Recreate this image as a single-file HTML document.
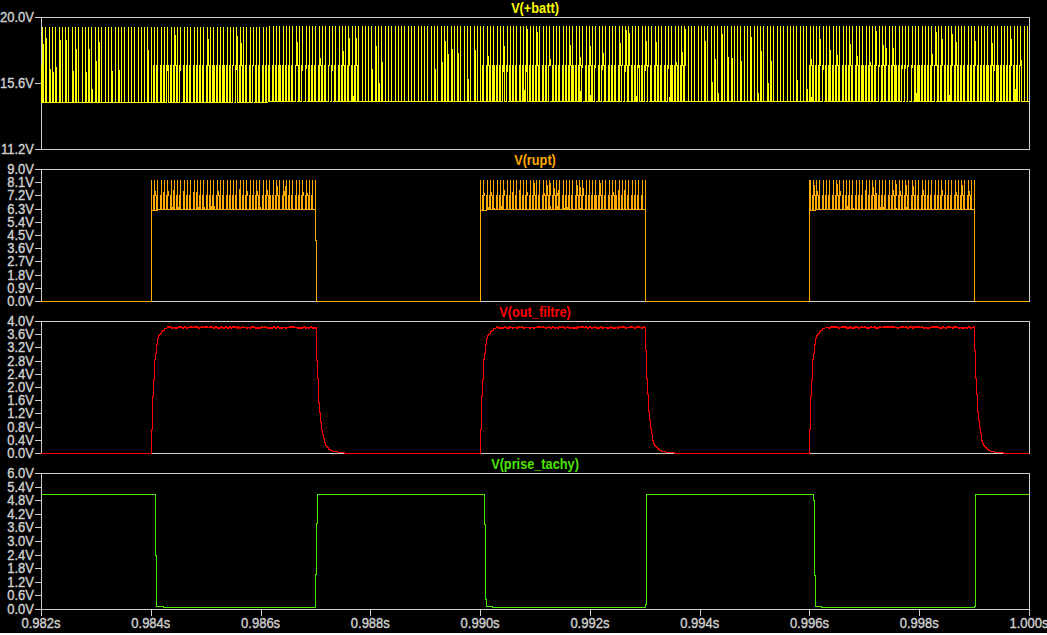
<!DOCTYPE html><html><head><meta charset="utf-8"><style>html,body{margin:0;padding:0;background:#000;width:1047px;height:635px;overflow:hidden}svg{display:block}text{font-family:"Liberation Sans",sans-serif;font-size:13px}</style></head><body>
<svg width="1047" height="635" viewBox="0 0 1047 635" shape-rendering="crispEdges">
<rect x="0" y="0" width="1047" height="635" fill="#000"/>
<rect x="0" y="633" width="1047" height="2" fill="#fff"/>
<path d="M41 17.5H1030M41 149.5H1030M41.5 17V150M1029.5 17V150M35 17.5H41M35 83.5H41M35 149.5H41M41 169.5H1030M41 301.5H1030M41.5 169V302M1029.5 169V302M35 169.5H41M35 182.5H41M35 195.5H41M35 209.5H41M35 222.5H41M35 235.5H41M35 248.5H41M35 261.5H41M35 275.5H41M35 288.5H41M35 301.5H41M41 321.5H1030M41 453.5H1030M41.5 321V454M1029.5 321V454M35 321.5H41M35 334.5H41M35 347.5H41M35 361.5H41M35 374.5H41M35 387.5H41M35 400.5H41M35 413.5H41M35 427.5H41M35 440.5H41M35 453.5H41M41 473.5H1030M41 609.5H1030M41.5 473V610M1029.5 473V610M35 473.5H41M35 487.5H41M35 500.5H41M35 514.5H41M35 527.5H41M35 541.5H41M35 555.5H41M35 568.5H41M35 582.5H41M35 595.5H41M35 609.5H41M41.5 610V616M151.5 610V616M261.5 610V616M370.5 610V616M480.5 610V616M590.5 610V616M700.5 610V616M809.5 610V616M919.5 610V616M1029.5 610V616" stroke="#d0d0d0" stroke-width="1" fill="none"/>
<g fill="#d0d0d0" stroke="#d0d0d0" stroke-width="0.35" text-anchor="end">
<text transform="translate(34 22) scale(1 1.1)">20.0V</text>
<text transform="translate(34 88) scale(1 1.1)">15.6V</text>
<text transform="translate(34 154) scale(1 1.1)">11.2V</text>
<text transform="translate(34 174) scale(1 1.1)">9.0V</text>
<text transform="translate(34 187) scale(1 1.1)">8.1V</text>
<text transform="translate(34 200) scale(1 1.1)">7.2V</text>
<text transform="translate(34 214) scale(1 1.1)">6.3V</text>
<text transform="translate(34 227) scale(1 1.1)">5.4V</text>
<text transform="translate(34 240) scale(1 1.1)">4.5V</text>
<text transform="translate(34 253) scale(1 1.1)">3.6V</text>
<text transform="translate(34 266) scale(1 1.1)">2.7V</text>
<text transform="translate(34 280) scale(1 1.1)">1.8V</text>
<text transform="translate(34 293) scale(1 1.1)">0.9V</text>
<text transform="translate(34 306) scale(1 1.1)">0.0V</text>
<text transform="translate(34 326) scale(1 1.1)">4.0V</text>
<text transform="translate(34 339) scale(1 1.1)">3.6V</text>
<text transform="translate(34 352) scale(1 1.1)">3.2V</text>
<text transform="translate(34 366) scale(1 1.1)">2.8V</text>
<text transform="translate(34 379) scale(1 1.1)">2.4V</text>
<text transform="translate(34 392) scale(1 1.1)">2.0V</text>
<text transform="translate(34 405) scale(1 1.1)">1.6V</text>
<text transform="translate(34 418) scale(1 1.1)">1.2V</text>
<text transform="translate(34 432) scale(1 1.1)">0.8V</text>
<text transform="translate(34 445) scale(1 1.1)">0.4V</text>
<text transform="translate(34 458) scale(1 1.1)">0.0V</text>
<text transform="translate(34 478) scale(1 1.1)">6.0V</text>
<text transform="translate(34 492) scale(1 1.1)">5.4V</text>
<text transform="translate(34 505) scale(1 1.1)">4.8V</text>
<text transform="translate(34 519) scale(1 1.1)">4.2V</text>
<text transform="translate(34 532) scale(1 1.1)">3.6V</text>
<text transform="translate(34 546) scale(1 1.1)">3.0V</text>
<text transform="translate(34 560) scale(1 1.1)">2.4V</text>
<text transform="translate(34 573) scale(1 1.1)">1.8V</text>
<text transform="translate(34 587) scale(1 1.1)">1.2V</text>
<text transform="translate(34 600) scale(1 1.1)">0.6V</text>
<text transform="translate(34 614) scale(1 1.1)">0.0V</text>
</g>
<g fill="#d0d0d0" stroke="#d0d0d0" stroke-width="0.35" text-anchor="middle">
<text transform="translate(41.0 628) scale(1 1.1)">0.982s</text>
<text transform="translate(150.8 628) scale(1 1.1)">0.984s</text>
<text transform="translate(260.6 628) scale(1 1.1)">0.986s</text>
<text transform="translate(370.3 628) scale(1 1.1)">0.988s</text>
<text transform="translate(480.1 628) scale(1 1.1)">0.990s</text>
<text transform="translate(589.9 628) scale(1 1.1)">0.992s</text>
<text transform="translate(699.7 628) scale(1 1.1)">0.994s</text>
<text transform="translate(809.4 628) scale(1 1.1)">0.996s</text>
<text transform="translate(919.2 628) scale(1 1.1)">0.998s</text>
<text transform="translate(1029.0 628) scale(1 1.1)">1.000s</text>
</g>
<text transform="translate(535 12.5) scale(0.98 1.1)" fill="#ffff00" text-anchor="middle" font-weight="bold">V(+batt)</text>
<text transform="translate(535 164.5) scale(0.98 1.1)" fill="#ffaa00" text-anchor="middle" font-weight="bold">V(rupt)</text>
<text transform="translate(535 316.5) scale(0.98 1.1)" fill="#ff0000" text-anchor="middle" font-weight="bold">V(out_filtre)</text>
<text transform="translate(535 468.5) scale(0.98 1.1)" fill="#4be600" text-anchor="middle" font-weight="bold">V(prise_tachy)</text>
<path fill="#ffff00" d="M41 65h1v38h-1zM42 27h1v76h-1zM43 44h1v59h-1zM45 27h1v76h-1zM46 38h1v65h-1zM49 27h1v76h-1zM50 69h1v34h-1zM52 27h1v76h-1zM53 72h1v31h-1zM55 27h1v76h-1zM56 67h1v36h-1zM59 27h1v76h-1zM60 40h1v63h-1zM62 27h1v76h-1zM65 27h1v76h-1zM66 40h1v63h-1zM68 27h1v76h-1zM72 27h1v76h-1zM73 71h1v32h-1zM75 27h1v76h-1zM76 49h1v54h-1zM78 27h1v76h-1zM82 27h1v76h-1zM85 27h1v76h-1zM86 72h1v31h-1zM88 27h1v76h-1zM89 49h1v54h-1zM91 27h1v76h-1zM92 89h1v14h-1zM95 27h1v76h-1zM96 61h1v42h-1zM98 27h1v76h-1zM99 42h1v61h-1zM101 27h1v76h-1zM105 27h1v76h-1zM108 27h1v76h-1zM111 27h1v76h-1zM112 71h1v32h-1zM115 27h1v76h-1zM118 27h1v76h-1zM119 70h1v33h-1zM121 27h1v76h-1zM124 27h1v76h-1zM128 27h1v76h-1zM131 27h1v76h-1zM134 27h1v76h-1zM138 27h1v76h-1zM141 27h1v76h-1zM144 27h1v76h-1zM147 27h1v76h-1zM148 50h1v53h-1zM151 27h1v76h-1zM154 27h1v76h-1zM153 65h1v38h-1zM157 27h1v76h-1zM156 65h1v38h-1zM161 27h1v76h-1zM160 65h1v38h-1zM164 27h1v76h-1zM163 65h1v38h-1zM167 27h1v44h-1zM166 65h1v38h-1zM168 65h1v38h-1zM171 27h1v76h-1zM170 65h1v38h-1zM174 27h1v76h-1zM173 65h1v38h-1zM175 35h1v31h-1zM177 27h1v76h-1zM176 65h1v38h-1zM180 27h1v44h-1zM179 65h1v38h-1zM184 27h1v76h-1zM183 65h1v38h-1zM187 27h1v76h-1zM186 65h1v38h-1zM190 27h1v76h-1zM189 65h1v38h-1zM194 27h1v76h-1zM193 65h1v38h-1zM197 27h1v76h-1zM196 65h1v38h-1zM200 27h1v76h-1zM199 65h1v38h-1zM203 27h1v76h-1zM202 65h1v38h-1zM207 27h1v76h-1zM206 65h1v38h-1zM208 39h1v27h-1zM210 27h1v76h-1zM209 65h1v38h-1zM213 27h1v76h-1zM212 65h1v38h-1zM214 65h1v38h-1zM217 27h1v76h-1zM216 65h1v38h-1zM220 27h1v76h-1zM219 65h1v38h-1zM223 27h1v76h-1zM222 65h1v38h-1zM224 65h1v38h-1zM227 27h1v76h-1zM226 65h1v38h-1zM230 27h1v76h-1zM229 65h1v38h-1zM233 27h1v39h-1zM232 65h1v38h-1zM236 27h1v43h-1zM235 65h1v38h-1zM237 65h1v38h-1zM237 36h1v30h-1zM240 27h1v76h-1zM239 65h1v38h-1zM241 43h1v23h-1zM243 27h1v76h-1zM242 65h1v38h-1zM246 27h1v76h-1zM245 65h1v38h-1zM250 27h1v76h-1zM249 65h1v38h-1zM253 27h1v39h-1zM252 65h1v38h-1zM256 27h1v76h-1zM255 65h1v38h-1zM259 27h1v76h-1zM258 65h1v38h-1zM263 27h1v76h-1zM262 65h1v38h-1zM266 27h1v76h-1zM265 65h1v38h-1zM269 26h1v76h-1zM268 65h1v37h-1zM273 26h1v76h-1zM272 65h1v37h-1zM276 26h1v76h-1zM275 65h1v37h-1zM279 26h1v76h-1zM278 65h1v37h-1zM280 65h1v37h-1zM283 26h1v76h-1zM282 65h1v37h-1zM286 26h1v76h-1zM285 65h1v37h-1zM289 26h1v76h-1zM288 65h1v37h-1zM292 26h1v76h-1zM291 65h1v37h-1zM296 26h1v40h-1zM295 65h1v37h-1zM297 42h1v24h-1zM299 26h1v76h-1zM298 65h1v37h-1zM302 26h1v45h-1zM301 65h1v37h-1zM306 26h1v43h-1zM305 65h1v37h-1zM309 26h1v76h-1zM308 65h1v37h-1zM312 26h1v76h-1zM311 65h1v37h-1zM315 26h1v76h-1zM314 65h1v37h-1zM319 26h1v76h-1zM318 65h1v37h-1zM320 58h1v8h-1zM322 26h1v76h-1zM321 65h1v37h-1zM325 26h1v76h-1zM324 65h1v37h-1zM329 26h1v40h-1zM328 65h1v37h-1zM332 26h1v45h-1zM331 65h1v37h-1zM335 26h1v76h-1zM334 65h1v37h-1zM339 26h1v76h-1zM338 65h1v37h-1zM342 26h1v76h-1zM341 65h1v37h-1zM343 51h1v15h-1zM345 26h1v76h-1zM344 65h1v37h-1zM348 26h1v76h-1zM347 65h1v37h-1zM349 38h1v28h-1zM352 26h1v76h-1zM351 65h1v37h-1zM353 96h1v6h-1zM355 26h1v76h-1zM354 65h1v37h-1zM356 38h1v28h-1zM358 26h1v76h-1zM357 65h1v37h-1zM362 26h1v76h-1zM365 26h1v76h-1zM368 26h1v76h-1zM371 26h1v76h-1zM372 69h1v33h-1zM375 26h1v76h-1zM376 46h1v56h-1zM378 26h1v76h-1zM379 83h1v19h-1zM381 26h1v76h-1zM382 62h1v40h-1zM385 26h1v76h-1zM388 26h1v76h-1zM391 26h1v76h-1zM395 26h1v76h-1zM398 26h1v76h-1zM401 26h1v76h-1zM404 26h1v76h-1zM408 26h1v76h-1zM411 26h1v76h-1zM414 26h1v76h-1zM418 26h1v76h-1zM421 26h1v76h-1zM424 26h1v76h-1zM427 26h1v76h-1zM431 26h1v76h-1zM434 26h1v76h-1zM435 69h1v33h-1zM437 26h1v76h-1zM441 26h1v76h-1zM442 62h1v40h-1zM444 26h1v76h-1zM445 41h1v61h-1zM447 26h1v76h-1zM448 54h1v48h-1zM451 26h1v76h-1zM452 49h1v53h-1zM454 26h1v76h-1zM457 26h1v76h-1zM458 53h1v49h-1zM460 26h1v76h-1zM464 26h1v76h-1zM467 26h1v76h-1zM468 79h1v23h-1zM470 26h1v76h-1zM474 26h1v76h-1zM475 50h1v52h-1zM477 26h1v76h-1zM480 26h1v76h-1zM483 26h1v76h-1zM482 65h1v37h-1zM487 26h1v76h-1zM486 65h1v37h-1zM488 56h1v10h-1zM490 26h1v76h-1zM489 65h1v37h-1zM493 26h1v76h-1zM492 65h1v37h-1zM494 65h1v37h-1zM497 26h1v76h-1zM496 65h1v37h-1zM500 26h1v76h-1zM499 65h1v37h-1zM503 26h1v46h-1zM502 65h1v37h-1zM504 65h1v37h-1zM504 46h1v20h-1zM507 26h1v46h-1zM506 65h1v37h-1zM510 26h1v76h-1zM509 65h1v37h-1zM513 26h1v76h-1zM512 65h1v37h-1zM516 26h1v76h-1zM515 65h1v37h-1zM520 26h1v76h-1zM519 65h1v37h-1zM523 26h1v76h-1zM522 65h1v37h-1zM524 90h1v12h-1zM526 26h1v46h-1zM525 65h1v37h-1zM527 65h1v37h-1zM527 29h1v37h-1zM530 26h1v76h-1zM529 65h1v37h-1zM533 26h1v76h-1zM532 65h1v37h-1zM536 26h1v76h-1zM535 65h1v37h-1zM537 32h1v34h-1zM539 26h1v76h-1zM538 65h1v37h-1zM543 26h1v76h-1zM542 65h1v37h-1zM546 26h1v76h-1zM545 65h1v37h-1zM549 26h1v40h-1zM548 65h1v37h-1zM550 59h1v7h-1zM553 26h1v76h-1zM552 65h1v37h-1zM556 26h1v76h-1zM555 65h1v37h-1zM559 26h1v76h-1zM558 65h1v37h-1zM563 26h1v76h-1zM562 65h1v37h-1zM566 26h1v76h-1zM565 65h1v37h-1zM569 26h1v76h-1zM568 65h1v37h-1zM570 45h1v21h-1zM572 26h1v76h-1zM571 65h1v37h-1zM573 65h1v37h-1zM576 26h1v76h-1zM575 65h1v37h-1zM579 26h1v76h-1zM578 65h1v37h-1zM580 91h1v11h-1zM580 57h1v9h-1zM582 26h1v42h-1zM581 65h1v37h-1zM586 26h1v76h-1zM585 65h1v37h-1zM589 26h1v76h-1zM588 65h1v37h-1zM590 95h1v7h-1zM590 46h1v20h-1zM592 26h1v76h-1zM591 65h1v37h-1zM595 26h1v42h-1zM594 65h1v37h-1zM599 26h1v76h-1zM598 65h1v37h-1zM602 26h1v44h-1zM601 65h1v37h-1zM603 53h1v13h-1zM605 26h1v76h-1zM604 65h1v37h-1zM609 26h1v76h-1zM608 65h1v37h-1zM612 26h1v76h-1zM611 65h1v37h-1zM615 26h1v76h-1zM614 65h1v37h-1zM619 26h1v76h-1zM618 65h1v37h-1zM620 43h1v23h-1zM622 26h1v40h-1zM621 65h1v37h-1zM625 26h1v46h-1zM624 65h1v37h-1zM626 30h1v36h-1zM628 26h1v76h-1zM627 65h1v37h-1zM629 33h1v33h-1zM632 26h1v76h-1zM631 65h1v37h-1zM635 26h1v76h-1zM634 65h1v37h-1zM636 96h1v6h-1zM638 26h1v42h-1zM637 65h1v37h-1zM639 65h1v37h-1zM642 26h1v76h-1zM641 65h1v37h-1zM645 26h1v45h-1zM644 65h1v37h-1zM646 41h1v25h-1zM648 26h1v41h-1zM647 65h1v37h-1zM651 26h1v76h-1zM650 65h1v37h-1zM655 26h1v76h-1zM654 65h1v37h-1zM656 42h1v24h-1zM658 26h1v76h-1zM657 65h1v37h-1zM661 26h1v76h-1zM660 65h1v37h-1zM665 26h1v76h-1zM664 65h1v37h-1zM668 26h1v43h-1zM667 65h1v37h-1zM669 97h1v5h-1zM671 26h1v76h-1zM670 65h1v37h-1zM672 65h1v37h-1zM675 26h1v76h-1zM674 65h1v37h-1zM676 62h1v4h-1zM678 26h1v76h-1zM677 65h1v37h-1zM681 26h1v76h-1zM680 65h1v37h-1zM682 52h1v14h-1zM684 26h1v76h-1zM683 65h1v37h-1zM685 29h1v37h-1zM688 26h1v76h-1zM691 26h1v76h-1zM694 26h1v76h-1zM698 26h1v76h-1zM701 26h1v76h-1zM704 26h1v76h-1zM705 41h1v61h-1zM707 26h1v76h-1zM711 26h1v76h-1zM712 82h1v20h-1zM714 26h1v76h-1zM715 59h1v43h-1zM717 26h1v76h-1zM718 93h1v9h-1zM721 26h1v76h-1zM722 34h1v68h-1zM724 26h1v76h-1zM727 26h1v76h-1zM728 57h1v45h-1zM731 26h1v76h-1zM732 58h1v44h-1zM734 26h1v76h-1zM737 26h1v76h-1zM740 26h1v76h-1zM741 61h1v41h-1zM744 26h1v76h-1zM747 26h1v76h-1zM750 26h1v76h-1zM751 37h1v65h-1zM754 26h1v76h-1zM757 26h1v76h-1zM758 93h1v9h-1zM760 26h1v76h-1zM761 51h1v51h-1zM763 26h1v76h-1zM767 26h1v76h-1zM768 83h1v19h-1zM770 26h1v76h-1zM771 61h1v41h-1zM773 26h1v76h-1zM777 26h1v76h-1zM780 26h1v76h-1zM783 26h1v76h-1zM787 26h1v76h-1zM790 26h1v76h-1zM793 26h1v76h-1zM796 26h1v76h-1zM797 80h1v22h-1zM800 26h1v76h-1zM803 26h1v76h-1zM806 26h1v76h-1zM807 89h1v13h-1zM810 26h1v76h-1zM809 65h1v37h-1zM811 97h1v5h-1zM811 59h1v7h-1zM813 26h1v76h-1zM812 65h1v37h-1zM816 26h1v76h-1zM815 65h1v37h-1zM819 26h1v76h-1zM818 65h1v37h-1zM820 39h1v27h-1zM823 26h1v44h-1zM822 65h1v37h-1zM826 26h1v76h-1zM825 65h1v37h-1zM829 26h1v76h-1zM828 65h1v37h-1zM830 65h1v37h-1zM830 50h1v16h-1zM833 26h1v76h-1zM832 65h1v37h-1zM836 26h1v76h-1zM835 65h1v37h-1zM837 55h1v11h-1zM839 26h1v76h-1zM838 65h1v37h-1zM843 26h1v76h-1zM842 65h1v37h-1zM846 26h1v76h-1zM845 65h1v37h-1zM849 26h1v76h-1zM848 65h1v37h-1zM850 44h1v22h-1zM852 26h1v76h-1zM851 65h1v37h-1zM856 26h1v76h-1zM855 65h1v37h-1zM857 56h1v10h-1zM859 26h1v76h-1zM858 65h1v37h-1zM862 26h1v76h-1zM861 65h1v37h-1zM863 65h1v37h-1zM866 26h1v76h-1zM865 65h1v37h-1zM869 26h1v76h-1zM868 65h1v37h-1zM870 62h1v4h-1zM872 26h1v76h-1zM871 65h1v37h-1zM875 26h1v76h-1zM874 65h1v37h-1zM876 31h1v35h-1zM879 26h1v41h-1zM878 65h1v37h-1zM882 26h1v76h-1zM881 65h1v37h-1zM883 45h1v21h-1zM885 26h1v76h-1zM884 65h1v37h-1zM886 48h1v18h-1zM889 26h1v76h-1zM888 65h1v37h-1zM892 26h1v76h-1zM891 65h1v37h-1zM893 48h1v18h-1zM895 26h1v76h-1zM894 65h1v37h-1zM896 65h1v37h-1zM899 26h1v76h-1zM898 65h1v37h-1zM902 26h1v43h-1zM901 65h1v37h-1zM905 26h1v43h-1zM904 65h1v37h-1zM908 26h1v41h-1zM907 65h1v37h-1zM912 26h1v42h-1zM911 65h1v37h-1zM915 26h1v76h-1zM914 65h1v37h-1zM916 93h1v9h-1zM918 26h1v76h-1zM917 65h1v37h-1zM919 65h1v37h-1zM922 26h1v76h-1zM921 65h1v37h-1zM925 26h1v76h-1zM924 65h1v37h-1zM928 26h1v76h-1zM927 65h1v37h-1zM931 26h1v76h-1zM930 65h1v37h-1zM932 54h1v12h-1zM935 26h1v40h-1zM934 65h1v37h-1zM936 32h1v34h-1zM938 26h1v76h-1zM937 65h1v37h-1zM941 26h1v76h-1zM940 65h1v37h-1zM942 39h1v27h-1zM945 26h1v76h-1zM944 65h1v37h-1zM948 26h1v76h-1zM947 65h1v37h-1zM949 95h1v7h-1zM951 26h1v76h-1zM950 65h1v37h-1zM952 34h1v32h-1zM955 26h1v76h-1zM954 65h1v37h-1zM956 42h1v24h-1zM958 26h1v76h-1zM957 65h1v37h-1zM961 26h1v76h-1zM960 65h1v37h-1zM964 26h1v76h-1zM963 65h1v37h-1zM968 26h1v76h-1zM967 65h1v37h-1zM971 26h1v76h-1zM970 65h1v37h-1zM974 26h1v76h-1zM973 65h1v37h-1zM975 41h1v25h-1zM978 26h1v76h-1zM977 65h1v37h-1zM981 26h1v76h-1zM980 65h1v37h-1zM984 26h1v76h-1zM983 65h1v37h-1zM987 26h1v76h-1zM986 65h1v37h-1zM988 65h1v37h-1zM991 26h1v76h-1zM990 65h1v37h-1zM992 43h1v23h-1zM994 26h1v45h-1zM993 65h1v37h-1zM997 26h1v76h-1zM996 65h1v37h-1zM998 65h1v37h-1zM1001 26h1v76h-1zM1000 65h1v37h-1zM1004 26h1v76h-1zM1003 65h1v37h-1zM1007 26h1v76h-1zM1006 65h1v37h-1zM1010 26h1v76h-1zM1009 65h1v37h-1zM1011 39h1v27h-1zM1014 26h1v76h-1zM1013 65h1v37h-1zM1015 89h1v13h-1zM1017 26h1v76h-1zM1016 65h1v37h-1zM1020 26h1v40h-1zM1019 65h1v37h-1zM1021 65h1v37h-1zM1021 60h1v6h-1zM1024 26h1v76h-1zM1027 26h1v76h-1zM41 102h126v1h-126zM168 102h12v1h-12zM181 102h52v1h-52zM234 102h2v1h-2zM237 102h16v1h-16zM254 102h14v1h-14zM268 101h28v1h-28zM297 101h5v1h-5zM303 101h3v1h-3zM307 101h22v1h-22zM330 101h2v1h-2zM333 101h170v1h-170zM504 101h3v1h-3zM508 101h18v1h-18zM527 101h22v1h-22zM550 101h32v1h-32zM583 101h12v1h-12zM596 101h6v1h-6zM603 101h19v1h-19zM623 101h2v1h-2zM626 101h12v1h-12zM639 101h6v1h-6zM646 101h2v1h-2zM649 101h19v1h-19zM669 101h154v1h-154zM824 101h55v1h-55zM880 101h22v1h-22zM903 101h2v1h-2zM906 101h2v1h-2zM909 101h3v1h-3zM913 101h22v1h-22zM936 101h58v1h-58zM995 101h25v1h-25zM1021 101h8v1h-8z"/>
<path fill="#ffaa00" d="M41 301h111v1h-111zM151 180h1v122h-1zM315 180h1v61h-1zM316 240h1v62h-1zM151 210h7v1h-7zM157 209h159v1h-159zM154 180h1v30h-1zM153 195h1v15h-1zM155 191h1v5h-1zM157 180h1v30h-1zM156 195h1v15h-1zM161 180h1v30h-1zM160 195h1v15h-1zM164 180h1v30h-1zM163 195h1v15h-1zM163 192h1v4h-1zM167 180h1v30h-1zM166 195h1v15h-1zM168 191h1v5h-1zM171 180h1v30h-1zM170 195h1v15h-1zM172 207h1v3h-1zM174 180h1v30h-1zM173 195h1v15h-1zM173 190h1v6h-1zM177 180h1v30h-1zM176 195h1v15h-1zM178 207h1v3h-1zM180 180h1v30h-1zM179 195h1v15h-1zM184 180h1v30h-1zM183 195h1v15h-1zM183 191h1v5h-1zM187 180h1v30h-1zM186 195h1v15h-1zM190 180h1v30h-1zM189 195h1v15h-1zM194 180h1v30h-1zM193 195h1v15h-1zM193 192h1v4h-1zM197 180h1v30h-1zM196 195h1v15h-1zM198 207h1v3h-1zM196 192h1v4h-1zM200 180h1v30h-1zM199 195h1v15h-1zM203 180h1v30h-1zM202 195h1v15h-1zM204 207h1v3h-1zM207 180h1v30h-1zM206 195h1v15h-1zM210 180h1v30h-1zM209 195h1v15h-1zM211 206h1v4h-1zM213 180h1v30h-1zM212 195h1v15h-1zM214 206h1v4h-1zM217 180h1v30h-1zM216 195h1v15h-1zM218 191h1v5h-1zM220 180h1v30h-1zM219 195h1v15h-1zM223 180h1v30h-1zM222 195h1v15h-1zM227 180h1v30h-1zM226 195h1v15h-1zM230 180h1v30h-1zM229 195h1v15h-1zM233 180h1v30h-1zM232 195h1v15h-1zM236 180h1v30h-1zM235 195h1v15h-1zM240 180h1v30h-1zM239 195h1v15h-1zM239 189h1v7h-1zM243 180h1v30h-1zM242 195h1v15h-1zM246 180h1v30h-1zM245 195h1v15h-1zM247 191h1v5h-1zM250 180h1v30h-1zM249 195h1v15h-1zM253 180h1v30h-1zM252 195h1v15h-1zM256 180h1v30h-1zM255 195h1v15h-1zM257 191h1v5h-1zM259 180h1v30h-1zM258 195h1v15h-1zM260 207h1v3h-1zM263 180h1v30h-1zM262 195h1v15h-1zM266 180h1v30h-1zM265 195h1v15h-1zM267 190h1v6h-1zM269 180h1v30h-1zM268 195h1v15h-1zM270 195h1v15h-1zM273 180h1v30h-1zM272 195h1v15h-1zM276 180h1v30h-1zM275 195h1v15h-1zM277 186h1v10h-1zM279 180h1v30h-1zM278 195h1v15h-1zM283 180h1v30h-1zM282 195h1v15h-1zM284 191h1v5h-1zM286 180h1v30h-1zM285 195h1v15h-1zM285 186h1v10h-1zM289 180h1v30h-1zM288 195h1v15h-1zM292 180h1v30h-1zM291 195h1v15h-1zM296 180h1v30h-1zM295 195h1v15h-1zM299 180h1v30h-1zM298 195h1v15h-1zM302 180h1v30h-1zM301 195h1v15h-1zM303 192h1v4h-1zM306 180h1v30h-1zM305 195h1v15h-1zM307 193h1v3h-1zM309 180h1v30h-1zM308 195h1v15h-1zM312 180h1v30h-1zM311 195h1v15h-1zM316 301h165v1h-165zM480 180h1v122h-1zM645 180h1v122h-1zM480 210h7v1h-7zM486 209h160v1h-160zM483 180h1v30h-1zM482 195h1v15h-1zM484 193h1v3h-1zM487 180h1v30h-1zM486 195h1v15h-1zM488 207h1v3h-1zM490 180h1v30h-1zM489 195h1v15h-1zM491 192h1v4h-1zM493 180h1v30h-1zM492 195h1v15h-1zM494 208h1v2h-1zM497 180h1v30h-1zM496 195h1v15h-1zM500 180h1v30h-1zM499 195h1v15h-1zM501 206h1v4h-1zM503 180h1v30h-1zM502 195h1v15h-1zM504 190h1v6h-1zM507 180h1v30h-1zM506 195h1v15h-1zM510 180h1v30h-1zM509 195h1v15h-1zM513 180h1v30h-1zM512 195h1v15h-1zM512 192h1v4h-1zM516 180h1v30h-1zM515 195h1v15h-1zM520 180h1v30h-1zM519 195h1v15h-1zM519 190h1v6h-1zM523 180h1v30h-1zM522 195h1v15h-1zM526 180h1v30h-1zM525 195h1v15h-1zM527 192h1v4h-1zM530 180h1v30h-1zM529 195h1v15h-1zM533 180h1v30h-1zM532 195h1v15h-1zM534 183h1v13h-1zM536 180h1v30h-1zM535 195h1v15h-1zM539 180h1v30h-1zM538 195h1v15h-1zM543 180h1v30h-1zM542 195h1v15h-1zM544 193h1v3h-1zM546 180h1v30h-1zM545 195h1v15h-1zM547 185h1v11h-1zM549 180h1v30h-1zM548 195h1v15h-1zM550 206h1v4h-1zM550 183h1v13h-1zM553 180h1v30h-1zM552 195h1v15h-1zM554 188h1v8h-1zM556 180h1v30h-1zM555 195h1v15h-1zM557 206h1v4h-1zM557 193h1v3h-1zM559 180h1v30h-1zM558 195h1v15h-1zM558 190h1v6h-1zM563 180h1v30h-1zM562 195h1v15h-1zM564 208h1v2h-1zM566 180h1v30h-1zM565 195h1v15h-1zM567 207h1v3h-1zM569 180h1v30h-1zM568 195h1v15h-1zM572 180h1v30h-1zM571 195h1v15h-1zM576 180h1v30h-1zM575 195h1v15h-1zM577 185h1v11h-1zM579 180h1v30h-1zM578 195h1v15h-1zM580 208h1v2h-1zM580 187h1v9h-1zM582 180h1v30h-1zM581 195h1v15h-1zM583 188h1v8h-1zM586 180h1v30h-1zM585 195h1v15h-1zM589 180h1v30h-1zM588 195h1v15h-1zM592 180h1v30h-1zM591 195h1v15h-1zM595 180h1v30h-1zM594 195h1v15h-1zM596 195h1v15h-1zM599 180h1v30h-1zM598 195h1v15h-1zM600 183h1v13h-1zM602 180h1v30h-1zM601 195h1v15h-1zM605 180h1v30h-1zM604 195h1v15h-1zM609 180h1v30h-1zM608 195h1v15h-1zM612 180h1v30h-1zM611 195h1v15h-1zM613 192h1v4h-1zM615 180h1v30h-1zM614 195h1v15h-1zM616 195h1v15h-1zM619 180h1v30h-1zM618 195h1v15h-1zM618 190h1v6h-1zM622 180h1v30h-1zM621 195h1v15h-1zM625 180h1v30h-1zM624 195h1v15h-1zM624 190h1v6h-1zM628 180h1v30h-1zM627 195h1v15h-1zM632 180h1v30h-1zM631 195h1v15h-1zM635 180h1v30h-1zM634 195h1v15h-1zM638 180h1v30h-1zM637 195h1v15h-1zM642 180h1v30h-1zM641 195h1v15h-1zM645 301h165v1h-165zM809 180h1v122h-1zM974 180h1v122h-1zM809 210h7v1h-7zM815 209h160v1h-160zM810 180h1v30h-1zM809 195h1v15h-1zM809 183h1v13h-1zM813 180h1v30h-1zM812 195h1v15h-1zM814 185h1v11h-1zM816 180h1v30h-1zM815 195h1v15h-1zM817 191h1v5h-1zM819 180h1v30h-1zM818 195h1v15h-1zM823 180h1v30h-1zM822 195h1v15h-1zM826 180h1v30h-1zM825 195h1v15h-1zM829 180h1v30h-1zM828 195h1v15h-1zM833 180h1v30h-1zM832 195h1v15h-1zM836 180h1v30h-1zM835 195h1v15h-1zM837 184h1v12h-1zM839 180h1v30h-1zM838 195h1v15h-1zM840 191h1v5h-1zM843 180h1v30h-1zM842 195h1v15h-1zM846 180h1v30h-1zM845 195h1v15h-1zM847 206h1v4h-1zM849 180h1v30h-1zM848 195h1v15h-1zM852 180h1v30h-1zM851 195h1v15h-1zM853 208h1v2h-1zM856 180h1v30h-1zM855 195h1v15h-1zM859 180h1v30h-1zM858 195h1v15h-1zM862 180h1v30h-1zM861 195h1v15h-1zM866 180h1v30h-1zM865 195h1v15h-1zM865 190h1v6h-1zM869 180h1v30h-1zM868 195h1v15h-1zM872 180h1v30h-1zM871 195h1v15h-1zM873 187h1v9h-1zM875 180h1v30h-1zM874 195h1v15h-1zM876 195h1v15h-1zM876 208h1v2h-1zM876 193h1v3h-1zM879 180h1v30h-1zM878 195h1v15h-1zM880 207h1v3h-1zM882 180h1v30h-1zM881 195h1v15h-1zM883 207h1v3h-1zM885 180h1v30h-1zM884 195h1v15h-1zM889 180h1v30h-1zM888 195h1v15h-1zM892 180h1v30h-1zM891 195h1v15h-1zM893 190h1v6h-1zM895 180h1v30h-1zM894 195h1v15h-1zM896 208h1v2h-1zM896 184h1v12h-1zM899 180h1v30h-1zM898 195h1v15h-1zM900 191h1v5h-1zM902 180h1v30h-1zM901 195h1v15h-1zM905 180h1v30h-1zM904 195h1v15h-1zM906 207h1v3h-1zM906 185h1v11h-1zM908 180h1v30h-1zM907 195h1v15h-1zM912 180h1v30h-1zM911 195h1v15h-1zM913 186h1v10h-1zM915 180h1v30h-1zM914 195h1v15h-1zM918 180h1v30h-1zM917 195h1v15h-1zM922 180h1v30h-1zM921 195h1v15h-1zM923 190h1v6h-1zM925 180h1v30h-1zM924 195h1v15h-1zM928 180h1v30h-1zM927 195h1v15h-1zM931 180h1v30h-1zM930 195h1v15h-1zM935 180h1v30h-1zM934 195h1v15h-1zM938 180h1v30h-1zM937 195h1v15h-1zM941 180h1v30h-1zM940 195h1v15h-1zM942 190h1v6h-1zM945 180h1v30h-1zM944 195h1v15h-1zM948 180h1v30h-1zM947 195h1v15h-1zM951 180h1v30h-1zM950 195h1v15h-1zM955 180h1v30h-1zM954 195h1v15h-1zM956 192h1v4h-1zM958 180h1v30h-1zM957 195h1v15h-1zM961 180h1v30h-1zM960 195h1v15h-1zM962 185h1v11h-1zM964 180h1v30h-1zM963 195h1v15h-1zM968 180h1v30h-1zM967 195h1v15h-1zM969 191h1v5h-1zM971 180h1v30h-1zM970 195h1v15h-1zM974 301h55v1h-55z"/>
<path fill="#ff0000" d="M41 453h111v1h-111zM151 429h1v25h-1zM152 396h1v34h-1zM153 379h1v18h-1zM154 359h1v21h-1zM155 353h1v7h-1zM156 344h1v10h-1zM157 338h1v7h-1zM158 335h1v4h-1zM159 334h1v2h-1zM160 333h1v2h-1zM161 331h1v3h-1zM162 330h1v2h-1zM163 330h1v1h-1zM164 328h1v3h-1zM165 328h1v1h-1zM166 328h1v1h-1zM167 326h1v2h-1zM168 326h1v2h-1zM169 326h1v2h-1zM170 326h1v2h-1zM171 327h1v2h-1zM172 327h1v2h-1zM173 327h1v1h-1zM174 327h1v2h-1zM175 327h1v2h-1zM176 327h1v2h-1zM177 327h1v2h-1zM178 326h1v2h-1zM179 326h1v2h-1zM180 326h1v2h-1zM181 326h1v2h-1zM182 327h1v2h-1zM183 327h1v2h-1zM184 326h1v2h-1zM185 326h1v2h-1zM186 327h1v2h-1zM187 327h1v2h-1zM188 327h1v1h-1zM189 326h1v2h-1zM190 326h1v2h-1zM191 326h1v2h-1zM192 326h1v2h-1zM193 327h1v1h-1zM194 326h1v2h-1zM195 326h1v2h-1zM196 326h1v2h-1zM197 326h1v2h-1zM198 327h1v2h-1zM199 327h1v2h-1zM200 327h1v1h-1zM201 326h1v2h-1zM202 326h1v2h-1zM203 327h1v1h-1zM204 326h1v2h-1zM205 326h1v2h-1zM206 326h1v2h-1zM207 326h1v2h-1zM208 327h1v1h-1zM209 326h1v2h-1zM210 326h1v2h-1zM211 326h1v2h-1zM212 326h1v2h-1zM213 327h1v2h-1zM214 327h1v2h-1zM215 326h1v2h-1zM216 326h1v2h-1zM217 327h1v2h-1zM218 327h1v2h-1zM219 327h1v2h-1zM220 327h1v2h-1zM221 326h1v2h-1zM222 326h1v2h-1zM223 327h1v2h-1zM224 327h1v2h-1zM225 326h1v2h-1zM226 326h1v2h-1zM227 327h1v2h-1zM228 327h1v2h-1zM229 326h1v2h-1zM230 326h1v3h-1zM231 327h1v2h-1zM232 326h1v2h-1zM233 326h1v2h-1zM234 326h1v2h-1zM235 326h1v2h-1zM236 327h1v2h-1zM237 326h1v3h-1zM238 326h1v2h-1zM239 327h1v2h-1zM240 327h1v2h-1zM241 327h1v1h-1zM242 326h1v2h-1zM243 326h1v2h-1zM244 327h1v1h-1zM245 327h1v1h-1zM246 327h1v2h-1zM247 327h1v2h-1zM248 327h1v1h-1zM249 327h1v2h-1zM250 327h1v2h-1zM251 326h1v2h-1zM252 326h1v2h-1zM253 326h1v2h-1zM254 326h1v2h-1zM255 327h1v2h-1zM256 327h1v2h-1zM257 327h1v2h-1zM258 327h1v2h-1zM259 327h1v2h-1zM260 327h1v2h-1zM261 326h1v2h-1zM262 326h1v2h-1zM263 327h1v1h-1zM264 326h1v2h-1zM265 326h1v2h-1zM266 327h1v1h-1zM267 327h1v2h-1zM268 327h1v2h-1zM269 327h1v2h-1zM270 327h1v2h-1zM271 327h1v2h-1zM272 327h1v2h-1zM273 326h1v2h-1zM274 326h1v2h-1zM275 327h1v2h-1zM276 327h1v2h-1zM277 326h1v2h-1zM278 326h1v2h-1zM279 327h1v2h-1zM280 327h1v2h-1zM281 327h1v2h-1zM282 327h1v2h-1zM283 327h1v1h-1zM284 327h1v1h-1zM285 327h1v2h-1zM286 327h1v2h-1zM287 327h1v1h-1zM288 327h1v1h-1zM289 326h1v2h-1zM290 326h1v2h-1zM291 326h1v2h-1zM292 326h1v2h-1zM293 326h1v2h-1zM294 326h1v2h-1zM295 327h1v1h-1zM296 327h1v1h-1zM297 327h1v2h-1zM298 327h1v2h-1zM299 327h1v2h-1zM300 327h1v2h-1zM301 327h1v2h-1zM302 327h1v2h-1zM303 326h1v2h-1zM304 326h1v2h-1zM305 327h1v2h-1zM306 327h1v2h-1zM307 327h1v1h-1zM308 327h1v2h-1zM309 327h1v2h-1zM310 326h1v2h-1zM311 326h1v2h-1zM312 327h1v2h-1zM313 327h1v2h-1zM314 327h1v2h-1zM315 327h1v2h-1zM316 327h1v34h-1zM317 360h1v19h-1zM318 378h1v25h-1zM319 402h1v11h-1zM320 412h1v11h-1zM321 422h1v9h-1zM322 430h1v5h-1zM323 434h1v5h-1zM324 438h1v5h-1zM325 442h1v4h-1zM326 445h1v2h-1zM327 446h1v2h-1zM328 447h1v3h-1zM329 449h1v1h-1zM330 449h1v2h-1zM331 450h1v1h-1zM332 450h1v2h-1zM333 451h1v1h-1zM334 451h1v1h-1zM335 451h1v1h-1zM336 451h1v1h-1zM337 451h1v2h-1zM338 452h1v1h-1zM339 452h1v1h-1zM340 452h1v1h-1zM341 452h1v1h-1zM342 452h1v1h-1zM343 452h1v1h-1zM344 452h1v2h-1zM344 453h137v1h-137zM480 429h1v25h-1zM481 396h1v34h-1zM482 379h1v18h-1zM483 359h1v21h-1zM484 353h1v7h-1zM485 344h1v10h-1zM486 338h1v7h-1zM487 335h1v4h-1zM488 334h1v2h-1zM489 333h1v2h-1zM490 331h1v3h-1zM491 330h1v2h-1zM492 330h1v1h-1zM493 328h1v3h-1zM494 328h1v1h-1zM495 328h1v1h-1zM496 326h1v2h-1zM497 326h1v2h-1zM498 327h1v2h-1zM499 327h1v2h-1zM500 327h1v2h-1zM501 327h1v2h-1zM502 327h1v2h-1zM503 327h1v2h-1zM504 326h1v2h-1zM505 326h1v2h-1zM506 327h1v2h-1zM507 327h1v2h-1zM508 327h1v2h-1zM509 326h1v3h-1zM510 326h1v2h-1zM511 327h1v1h-1zM512 327h1v2h-1zM513 327h1v2h-1zM514 327h1v1h-1zM515 327h1v1h-1zM516 327h1v2h-1zM517 327h1v2h-1zM518 326h1v2h-1zM519 326h1v2h-1zM520 327h1v1h-1zM521 326h1v2h-1zM522 326h1v2h-1zM523 327h1v2h-1zM524 327h1v2h-1zM525 327h1v1h-1zM526 327h1v1h-1zM527 327h1v1h-1zM528 327h1v1h-1zM529 327h1v2h-1zM530 327h1v2h-1zM531 327h1v1h-1zM532 327h1v1h-1zM533 327h1v2h-1zM534 327h1v2h-1zM535 327h1v1h-1zM536 327h1v1h-1zM537 326h1v2h-1zM538 326h1v2h-1zM539 326h1v2h-1zM540 326h1v2h-1zM541 327h1v1h-1zM542 326h1v2h-1zM543 326h1v2h-1zM544 327h1v1h-1zM545 327h1v2h-1zM546 327h1v2h-1zM547 327h1v1h-1zM548 326h1v2h-1zM549 326h1v2h-1zM550 327h1v2h-1zM551 327h1v2h-1zM552 326h1v2h-1zM553 326h1v2h-1zM554 327h1v2h-1zM555 327h1v2h-1zM556 327h1v1h-1zM557 327h1v2h-1zM558 327h1v2h-1zM559 326h1v2h-1zM560 326h1v2h-1zM561 327h1v1h-1zM562 326h1v2h-1zM563 326h1v2h-1zM564 327h1v2h-1zM565 327h1v2h-1zM566 327h1v1h-1zM567 326h1v2h-1zM568 326h1v2h-1zM569 327h1v2h-1zM570 327h1v2h-1zM571 327h1v1h-1zM572 327h1v2h-1zM573 327h1v2h-1zM574 327h1v2h-1zM575 327h1v2h-1zM576 327h1v2h-1zM577 326h1v3h-1zM578 326h1v2h-1zM579 327h1v1h-1zM580 326h1v2h-1zM581 326h1v2h-1zM582 326h1v2h-1zM583 326h1v2h-1zM584 327h1v1h-1zM585 326h1v2h-1zM586 326h1v2h-1zM587 327h1v2h-1zM588 327h1v2h-1zM589 326h1v2h-1zM590 326h1v2h-1zM591 327h1v2h-1zM592 327h1v2h-1zM593 327h1v1h-1zM594 326h1v2h-1zM595 326h1v2h-1zM596 327h1v2h-1zM597 327h1v2h-1zM598 327h1v2h-1zM599 327h1v2h-1zM600 326h1v2h-1zM601 326h1v2h-1zM602 327h1v2h-1zM603 327h1v2h-1zM604 327h1v1h-1zM605 327h1v1h-1zM606 327h1v2h-1zM607 327h1v2h-1zM608 327h1v2h-1zM609 327h1v2h-1zM610 326h1v2h-1zM611 326h1v2h-1zM612 327h1v2h-1zM613 327h1v2h-1zM614 327h1v2h-1zM615 327h1v2h-1zM616 327h1v1h-1zM617 327h1v2h-1zM618 326h1v3h-1zM619 326h1v2h-1zM620 327h1v1h-1zM621 326h1v2h-1zM622 326h1v2h-1zM623 326h1v2h-1zM624 326h1v2h-1zM625 327h1v2h-1zM626 327h1v2h-1zM627 327h1v1h-1zM628 327h1v1h-1zM629 326h1v2h-1zM630 326h1v2h-1zM631 326h1v2h-1zM632 326h1v2h-1zM633 327h1v1h-1zM634 327h1v2h-1zM635 327h1v2h-1zM636 326h1v2h-1zM637 326h1v2h-1zM638 326h1v2h-1zM639 326h1v2h-1zM640 327h1v1h-1zM641 327h1v2h-1zM642 327h1v2h-1zM643 326h1v2h-1zM644 326h1v2h-1zM645 327h1v24h-1zM646 350h1v29h-1zM647 378h1v17h-1zM648 394h1v18h-1zM649 411h1v10h-1zM650 420h1v9h-1zM651 428h1v6h-1zM652 433h1v8h-1zM653 440h1v4h-1zM654 443h1v3h-1zM655 445h1v2h-1zM656 446h1v2h-1zM657 447h1v2h-1zM658 448h1v2h-1zM659 449h1v2h-1zM660 450h1v1h-1zM661 450h1v2h-1zM662 451h1v1h-1zM663 451h1v1h-1zM664 451h1v1h-1zM665 451h1v2h-1zM666 452h1v1h-1zM667 452h1v1h-1zM668 452h1v1h-1zM669 452h1v1h-1zM670 452h1v1h-1zM671 452h1v1h-1zM672 452h1v1h-1zM673 452h1v1h-1zM674 452h1v2h-1zM674 453h136v1h-136zM809 429h1v25h-1zM810 396h1v34h-1zM811 379h1v18h-1zM812 359h1v21h-1zM813 353h1v7h-1zM814 344h1v10h-1zM815 338h1v7h-1zM816 335h1v4h-1zM817 334h1v2h-1zM818 333h1v2h-1zM819 331h1v3h-1zM820 330h1v2h-1zM821 330h1v1h-1zM822 328h1v3h-1zM823 328h1v1h-1zM824 328h1v1h-1zM825 327h1v1h-1zM826 327h1v1h-1zM827 327h1v1h-1zM828 327h1v2h-1zM829 327h1v2h-1zM830 326h1v2h-1zM831 326h1v2h-1zM832 326h1v2h-1zM833 326h1v2h-1zM834 326h1v2h-1zM835 326h1v2h-1zM836 326h1v2h-1zM837 326h1v2h-1zM838 327h1v2h-1zM839 327h1v2h-1zM840 327h1v1h-1zM841 326h1v2h-1zM842 326h1v2h-1zM843 326h1v2h-1zM844 326h1v2h-1zM845 326h1v2h-1zM846 326h1v3h-1zM847 327h1v2h-1zM848 327h1v2h-1zM849 326h1v3h-1zM850 326h1v2h-1zM851 327h1v2h-1zM852 327h1v2h-1zM853 327h1v2h-1zM854 326h1v3h-1zM855 326h1v2h-1zM856 326h1v2h-1zM857 326h1v2h-1zM858 327h1v2h-1zM859 327h1v2h-1zM860 327h1v1h-1zM861 326h1v2h-1zM862 326h1v2h-1zM863 327h1v1h-1zM864 326h1v2h-1zM865 326h1v2h-1zM866 327h1v2h-1zM867 327h1v2h-1zM868 327h1v2h-1zM869 327h1v2h-1zM870 326h1v2h-1zM871 326h1v2h-1zM872 327h1v1h-1zM873 327h1v1h-1zM874 326h1v2h-1zM875 326h1v3h-1zM876 327h1v2h-1zM877 327h1v2h-1zM878 327h1v2h-1zM879 326h1v2h-1zM880 326h1v2h-1zM881 327h1v1h-1zM882 327h1v1h-1zM883 326h1v2h-1zM884 326h1v2h-1zM885 326h1v2h-1zM886 326h1v2h-1zM887 326h1v2h-1zM888 326h1v2h-1zM889 326h1v2h-1zM890 326h1v2h-1zM891 326h1v2h-1zM892 326h1v2h-1zM893 326h1v2h-1zM894 326h1v2h-1zM895 327h1v1h-1zM896 327h1v1h-1zM897 327h1v2h-1zM898 327h1v2h-1zM899 327h1v1h-1zM900 326h1v2h-1zM901 326h1v2h-1zM902 326h1v2h-1zM903 326h1v2h-1zM904 327h1v1h-1zM905 326h1v2h-1zM906 326h1v2h-1zM907 327h1v2h-1zM908 327h1v2h-1zM909 326h1v2h-1zM910 326h1v2h-1zM911 326h1v2h-1zM912 326h1v3h-1zM913 327h1v2h-1zM914 326h1v2h-1zM915 326h1v2h-1zM916 326h1v2h-1zM917 326h1v2h-1zM918 326h1v2h-1zM919 326h1v2h-1zM920 327h1v1h-1zM921 326h1v2h-1zM922 326h1v2h-1zM923 327h1v2h-1zM924 327h1v2h-1zM925 327h1v1h-1zM926 327h1v2h-1zM927 327h1v2h-1zM928 327h1v2h-1zM929 327h1v2h-1zM930 327h1v1h-1zM931 326h1v2h-1zM932 326h1v2h-1zM933 326h1v2h-1zM934 326h1v2h-1zM935 326h1v2h-1zM936 326h1v2h-1zM937 326h1v2h-1zM938 326h1v2h-1zM939 327h1v2h-1zM940 327h1v2h-1zM941 327h1v2h-1zM942 326h1v3h-1zM943 326h1v2h-1zM944 327h1v1h-1zM945 327h1v2h-1zM946 327h1v2h-1zM947 326h1v2h-1zM948 326h1v2h-1zM949 326h1v2h-1zM950 326h1v2h-1zM951 327h1v1h-1zM952 327h1v2h-1zM953 326h1v3h-1zM954 326h1v2h-1zM955 326h1v2h-1zM956 326h1v2h-1zM957 327h1v1h-1zM958 327h1v2h-1zM959 327h1v2h-1zM960 327h1v1h-1zM961 327h1v2h-1zM962 327h1v2h-1zM963 327h1v2h-1zM964 327h1v2h-1zM965 327h1v1h-1zM966 327h1v2h-1zM967 327h1v2h-1zM968 326h1v2h-1zM969 326h1v2h-1zM970 327h1v2h-1zM971 327h1v2h-1zM972 327h1v1h-1zM973 326h1v2h-1zM974 326h1v25h-1zM975 350h1v29h-1zM976 378h1v17h-1zM977 394h1v18h-1zM978 411h1v10h-1zM979 420h1v9h-1zM980 428h1v6h-1zM981 433h1v8h-1zM982 440h1v4h-1zM983 443h1v3h-1zM984 445h1v2h-1zM985 446h1v2h-1zM986 447h1v2h-1zM987 448h1v2h-1zM988 449h1v2h-1zM989 450h1v1h-1zM990 450h1v2h-1zM991 451h1v1h-1zM992 451h1v1h-1zM993 451h1v1h-1zM994 451h1v2h-1zM995 452h1v1h-1zM996 452h1v1h-1zM997 452h1v1h-1zM998 452h1v1h-1zM999 452h1v1h-1zM1000 452h1v1h-1zM1001 452h1v1h-1zM1002 452h1v1h-1zM1003 452h1v2h-1zM1003 453h26v1h-26z"/>
<path fill="#4be600" d="M41 494h115v1h-115zM155 494h1v62h-1zM155 555h2v1h-2zM156 555h1v52h-1zM156 606h8v1h-8zM163 606h1v2h-1zM163 607h153v1h-153zM315 574h1v34h-1zM315 574h2v1h-2zM316 523h1v52h-1zM316 523h2v1h-2zM317 494h1v30h-1zM317 494h168v1h-168zM484 494h1v31h-1zM484 524h2v1h-2zM485 524h1v76h-1zM485 599h2v1h-2zM486 599h1v8h-1zM486 606h7v1h-7zM492 606h1v2h-1zM492 607h154v1h-154zM645 604h1v4h-1zM645 604h2v1h-2zM646 494h1v111h-1zM646 494h168v1h-168zM813 494h1v7h-1zM813 500h2v1h-2zM814 500h1v76h-1zM814 575h2v1h-2zM815 575h1v32h-1zM815 606h7v1h-7zM821 606h1v2h-1zM821 607h154v1h-154zM974 606h1v2h-1zM974 606h2v1h-2zM975 494h1v113h-1zM975 494h54v1h-54z"/>
</svg></body></html>
